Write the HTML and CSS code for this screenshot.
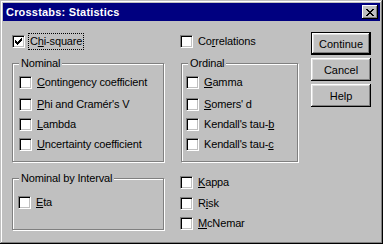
FILE: index.html
```html
<!DOCTYPE html>
<html>
<head>
<meta charset="utf-8">
<link rel="stylesheet" href="styles.css">
</head>
<body>
    <div class="window">
        <div class="titlebar">
            <span class="title">Crosstabs: Statistics</span>
            <button class="close-btn" type="button">
                <svg width="8" height="7" viewBox="0 0 8 7" shape-rendering="crispEdges"><path d="M0 0h2v1h-2zM6 0h2v1h-2zM1 1h2v1h-2zM5 1h2v1h-2zM2 2h4v1h-4zM3 3h2v1h-2zM2 4h4v1h-4zM1 5h2v1h-2zM5 5h2v1h-2zM0 6h2v1h-2zM6 6h2v1h-2z" fill="#000"/></svg>
            </button>
        </div>
        <div class="dialog">
            <div class="options">
                <label class="check">
                    <span class="box"><svg width="7" height="7" viewBox="0 0 7 7" shape-rendering="crispEdges"><path d="M6 0h1v1h-1zM5 1h2v1h-2zM0 2h1v1h-1zM4 2h3v1h-3zM0 3h2v1h-2zM3 3h3v1h-3zM0 4h5v1h-5zM1 5h3v1h-3zM2 6h1v1h-1z" fill="#000"/></svg></span>
                    <span class="text focus">C<u>h</u>i-square</span>
                </label>
                <label class="check">
                    <span class="box"></span>
                    <span class="text">Co<u>r</u>relations</span>
                </label>

                <fieldset class="group nominal">
                    <legend>Nominal</legend>
                    <div class="group-body">
                        <label class="check first"><span class="box"></span><span class="text"><u>C</u>ontingency coefficient</span></label>
                        <label class="check"><span class="box"></span><span class="text"><u>P</u>hi and Cramér's V</span></label>
                        <label class="check"><span class="box"></span><span class="text"><u>L</u>ambda</span></label>
                        <label class="check"><span class="box"></span><span class="text"><u>U</u>ncertainty coefficient</span></label>
                    </div>
                </fieldset>
                <fieldset class="group ordinal">
                    <legend>Ordinal</legend>
                    <div class="group-body">
                        <label class="check first"><span class="box"></span><span class="text"><u>G</u>amma</span></label>
                        <label class="check"><span class="box"></span><span class="text"><u>S</u>omers' d</span></label>
                        <label class="check"><span class="box"></span><span class="text">Kendall's tau-<u>b</u></span></label>
                        <label class="check"><span class="box"></span><span class="text">Kendall's tau-<u>c</u></span></label>
                    </div>
                </fieldset>

                <fieldset class="group interval">
                    <legend>Nominal by Interval</legend>
                    <div class="group-body">
                        <label class="check"><span class="box"></span><span class="text"><u>E</u>ta</span></label>
                    </div>
                </fieldset>
                <div class="extra">
                    <label class="check first"><span class="box"></span><span class="text"><u>K</u>appa</span></label>
                    <label class="check"><span class="box"></span><span class="text">R<u>i</u>sk</span></label>
                    <label class="check"><span class="box"></span><span class="text"><u>M</u>cNemar</span></label>
                </div>
            </div>

            <div class="buttons">
                <button class="btn default" type="button">Continue</button>
                <button class="btn" type="button">Cancel</button>
                <button class="btn" type="button">Help</button>
            </div>
        </div>
    </div>
</body>
</html>
```

FILE: styles.css
```css
* {
    box-sizing: border-box;
}

body {
    margin: 0;
    background: #c0c0c0;
    font-family: "Liberation Sans", Arial, sans-serif;
    font-size: 11px;
    letter-spacing: -0.15px;
    color: #000;
}

/* window frame */
.window {
    width: 383px;
    height: 244px;
    padding: 3px;
    background: #c0c0c0;
    box-shadow: inset -1px -1px #000, inset 1px 1px #c0c0c0, inset -2px -2px #808080, inset 2px 2px #fff;
}

.titlebar {
    display: flex;
    align-items: center;
    justify-content: space-between;
    height: 18px;
    padding: 0 2px 0 3px;
    background: #000080;
    color: #fff;
    font-weight: bold;
    letter-spacing: 0.2px;
}

.close-btn {
    display: flex;
    align-items: flex-start;
    width: 16px;
    height: 14px;
    padding: 4px 0 0 4px;
    border: 0;
    background: #c0c0c0;
    box-shadow: inset -1px -1px #000, inset 1px 1px #fff, inset -2px -2px #808080;
}

.close-btn svg {
    display: block;
}

/* dialog content */
.dialog {
    display: flex;
}

.options {
    display: grid;
    grid-template-columns: 152px 119px;
    column-gap: 16px;
    row-gap: 9px;
    margin: 14px 0 0 9px;
}

.check {
    display: flex;
    align-items: center;
    height: 13px;
}

.box {
    display: flex;
    flex: none;
    width: 13px;
    height: 13px;
    padding: 2px;
    border: 1px solid;
    border-color: #808080 #fff #fff #808080;
    background: #fff;
    box-shadow: inset 1px 1px #000, inset -1px -1px #c0c0c0;
}

.text {
    display: inline-block;
    margin-left: 3px;
    padding: 0 1px;
    border: 1px solid transparent;
    line-height: 13px;
    white-space: nowrap;
}

.text.focus {
    border: 1px dotted #000;
    line-height: 15px;
}

/* group boxes */
.group {
    margin: 0;
    padding: 0;
    min-width: 0;
    border: 1px solid #808080;
    box-shadow: inset 1px 1px #fff, 1px 1px #fff;
}

.group legend {
    margin-left: 6px;
    padding: 0 2px;
    line-height: 13px;
    background: #c0c0c0;
}

.group-body {
    display: flex;
    flex-direction: column;
    gap: 7px;
}

.check.first {
    margin-bottom: 2px;
}

.nominal .group-body {
    padding: 6px 0 10px 6px;
}

.ordinal {
    margin-left: 1px;
    width: 117px;
}

.ordinal .group-body {
    padding: 6px 0 10px 4px;
}

.interval {
    margin-top: 1px;
}

.interval .group-body {
    padding: 11px 0 17px 5px;
}

.extra {
    display: flex;
    flex-direction: column;
    gap: 7px;
    padding-top: 5px;
}

.extra .check.first {
    margin-bottom: 1px;
}

/* push buttons */
.buttons {
    display: flex;
    flex-direction: column;
    gap: 3px;
    margin: 11px 0 0 12px;
}

.btn {
    width: 60px;
    height: 23px;
    padding: 0;
    border: 0;
    background: #c0c0c0;
    font: inherit;
    color: #000;
    box-shadow: inset -1px -1px #000, inset 1px 1px #fff, inset -2px -2px #808080, inset 2px 2px #dfdfdf;
}

.btn.default {
    border: 1px solid #000;
}
```
